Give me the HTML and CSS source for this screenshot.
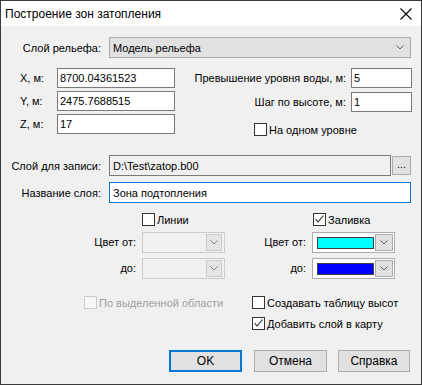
FILE: index.html
```html
<!DOCTYPE html>
<html>
<head>
<meta charset="utf-8">
<link rel="stylesheet" href="styles.css">
</head>
<body>
<div class="window">
  <div class="titlebar">
    <span class="title">Построение зон затопления</span>
    <svg class="close" width="12" height="12" viewBox="0 0 12 12"><path d="M0.5 0.5 L11.5 11.5 M11.5 0.5 L0.5 11.5" stroke="#000" stroke-width="1.1" fill="none"/></svg>
  </div>

  <div class="row row-relief">
    <span class="lbl">Слой рельефа:</span>
    <div class="combo-wide">
      <span>Модель рельефа</span>
      <svg class="chev" width="8" height="5" viewBox="0 0 8 5"><path d="M0.5 0.5 L4 4 L7.5 0.5" stroke="#606060" fill="none"/></svg>
    </div>
  </div>

  <div class="coords">
    <div class="xyz">
      <span>X, м:</span><div class="tb tb-coord">8700.04361523</div>
      <span>Y, м:</span><div class="tb tb-coord">2475.7688515</div>
      <span>Z, м:</span><div class="tb tb-coord">17</div>
    </div>
    <div class="params">
      <div class="prow"><span class="plbl">Превышение уровня воды, м:</span><div class="tb">5</div></div>
      <div class="prow prow2"><span class="plbl">Шаг по высоте, м:</span><div class="tb">1</div></div>
      <div class="chk chk-level"><span class="box"></span><span>На одном уровне</span></div>
    </div>
  </div>

  <div class="row row-record">
    <span class="lbl">Слой для записи:</span>
    <div class="tb tb-ro">D:\Test\zatop.b00</div>
    <div class="btn-dots">...</div>
  </div>

  <div class="row row-name">
    <span class="lbl">Название слоя:</span>
    <div class="tb tb-focus">Зона подтопления</div>
  </div>

  <div class="colors">
    <div class="chk c2"><span class="box"></span><span>Линии</span></div>
    <div class="chk c4 chk-fill"><span class="box"><svg width="11" height="11" viewBox="0 0 11 11"><path d="M1.5 5 L4 8 L9.5 1.5" stroke="#222" stroke-width="1.1" fill="none"/></svg></span><span>Заливка</span></div>

    <span class="clbl c1">Цвет от:</span>
    <div class="ccombo disabled c2"><div class="dd"><svg width="8" height="5" viewBox="0 0 8 5"><path d="M0.5 0.5 L4 4 L7.5 0.5" stroke="#808080" fill="none"/></svg></div></div>
    <span class="clbl c3">Цвет от:</span>
    <div class="ccombo c4"><span class="swatch cyan"></span><div class="dd"><svg width="8" height="5" viewBox="0 0 8 5"><path d="M0.5 0.5 L4 4 L7.5 0.5" stroke="#606060" fill="none"/></svg></div></div>

    <span class="clbl c1">до:</span>
    <div class="ccombo disabled c2"><div class="dd"><svg width="8" height="5" viewBox="0 0 8 5"><path d="M0.5 0.5 L4 4 L7.5 0.5" stroke="#808080" fill="none"/></svg></div></div>
    <span class="clbl c3">до:</span>
    <div class="ccombo c4"><span class="swatch blue"></span><div class="dd"><svg width="8" height="5" viewBox="0 0 8 5"><path d="M0.5 0.5 L4 4 L7.5 0.5" stroke="#606060" fill="none"/></svg></div></div>
  </div>

  <div class="options">
    <div class="chk disabled"><span class="box"></span><span>По выделенной области</span></div>
    <div class="chk"><span class="box"></span><span>Создавать таблицу высот</span></div>
    <div class="chk o2"><span class="box"><svg width="11" height="11" viewBox="0 0 11 11"><path d="M1.5 5 L4 8 L9.5 1.5" stroke="#222" stroke-width="1.1" fill="none"/></svg></span><span>Добавить слой в карту</span></div>
  </div>

  <div class="buttons">
    <div class="btn btn-default">OK</div>
    <div class="btn">Отмена</div>
    <div class="btn btn-help">Справка</div>
  </div>
</div>
</body>
</html>
```

FILE: styles.css
```css
html, body {
  margin: 0;
  padding: 0;
  background: #f0f0f0;
}

.window {
  width: 422px;
  height: 385px;
  box-sizing: border-box;
  border: 1px solid #3a3a3a;
  background: #f0f0f0;
  display: flex;
  flex-direction: column;
  font-family: "Liberation Sans", Arial, sans-serif;
  font-size: 11px;
  color: #000;
}

.titlebar {
  height: 25px;
  flex: none;
  background: #fff;
  display: flex;
  align-items: center;
  justify-content: space-between;
  padding: 0 9px 0 4px;
}

.title {
  font-size: 12px;
}

.row {
  display: flex;
  align-items: center;
}

.lbl {
  width: 100px;
  margin-right: 8px;
  text-align: right;
  flex: none;
}

.row-relief {
  margin-top: 11px;
  height: 21px;
}

.combo-wide {
  width: 302px;
  height: 21px;
  box-sizing: border-box;
  border: 1px solid #adadad;
  background: #e1e1e1;
  display: flex;
  align-items: center;
  justify-content: space-between;
  padding: 0 6px 0 3px;
}

.tb {
  box-sizing: border-box;
  height: 20px;
  border: 1px solid #7a7a7a;
  background: #fff;
  display: flex;
  align-items: center;
  padding-left: 2px;
}

.coords {
  display: flex;
  justify-content: space-between;
  margin-top: 10px;
}

.xyz {
  margin-left: 19px;
  display: grid;
  grid-template-columns: 37px 118px;
  grid-auto-rows: 20px;
  row-gap: 3px;
  align-items: center;
}

.params {
  width: 232px;
  margin-right: 9px;
  display: flex;
  flex-direction: column;
}

.prow {
  display: grid;
  grid-template-columns: 166px 61px;
  column-gap: 5px;
  align-items: center;
}

.plbl {
  text-align: right;
}

.prow2 {
  margin-top: 4px;
}

.chk {
  display: flex;
  align-items: center;
  height: 13px;
}

.chk .box {
  width: 13px;
  height: 13px;
  box-sizing: border-box;
  border: 1px solid #333;
  background: #fff;
  margin-right: 2px;
  flex: none;
  display: flex;
  align-items: center;
  justify-content: center;
}

.chk.disabled {
  color: #a0a0a0;
}

.chk.disabled .box {
  border-color: #cccccc;
  background: #f7f7f7;
}

.chk-level {
  margin-top: 11px;
  margin-left: 74px;
}

.row-record {
  margin-top: 19px;
  height: 21px;
}

.tb-ro {
  width: 282px;
  height: 21px;
  background: #f0f0f0;
  border-color: #7a7a7a;
  padding-left: 3px;
}

.btn-dots {
  width: 19px;
  height: 19px;
  box-sizing: border-box;
  margin-left: 1px;
  border: 1px solid #adadad;
  background: #e1e1e1;
  display: flex;
  align-items: flex-end;
  justify-content: center;
  line-height: 13px;
  padding-bottom: 3px;
}

.row-name {
  margin-top: 6px;
  height: 21px;
}

.tb-focus {
  width: 302px;
  height: 21px;
  border-color: #0078d7;
  padding-left: 3px;
}

.colors {
  margin-top: 10px;
  display: grid;
  grid-template-columns: 135px 83px 75px 83px;
  grid-template-rows: 19px 26px 21px;
  column-gap: 6px;
  align-items: start;
}

.c1 { grid-column: 1; }
.c2 { grid-column: 2; }
.c3 { grid-column: 3; }
.c4 { grid-column: 4; }

.chk-fill {
  margin-left: 1px;
}

.clbl {
  height: 21px;
  line-height: 21px;
  text-align: right;
}

.ccombo {
  width: 83px;
  height: 21px;
  box-sizing: border-box;
  border: 1px solid #adadad;
  background: #fff;
  display: flex;
  align-items: center;
  padding-left: 4px;
}

.ccombo.disabled {
  border-color: #cccccc;
  background: #f0f0f0;
}

.swatch {
  width: 57px;
  height: 12px;
  box-sizing: border-box;
  border: 1px solid #404040;
}

.swatch.cyan { background: #00ffff; }
.swatch.blue { background: #0000ff; }

.dd {
  margin-left: auto;
  margin-right: 1px;
  width: 18px;
  height: 17px;
  box-sizing: border-box;
  border: 1px solid #adadad;
  background: #e1e1e1;
  display: flex;
  align-items: center;
  justify-content: center;
}

.ccombo.disabled .dd {
  border-color: #cccccc;
  background: #e5e5e5;
  width: 16px;
  margin-right: 2px;
}

.options {
  margin-top: 17px;
  margin-left: 83px;
  display: grid;
  grid-template-columns: 168px auto;
  row-gap: 8px;
}

.o2 {
  grid-column: 2;
}

.buttons {
  margin-top: 20px;
  margin-left: 168px;
  display: flex;
}

.btn {
  width: 73px;
  height: 22px;
  box-sizing: border-box;
  border: 1px solid #adadad;
  background: #e1e1e1;
  display: flex;
  align-items: center;
  justify-content: center;
  font-size: 12px;
}

.btn + .btn {
  margin-left: 12px;
}

.btn-default {
  border: 2px solid #0078d7;
}

.btn-help {
  width: 72px;
  margin-left: 11px !important;
}
```
